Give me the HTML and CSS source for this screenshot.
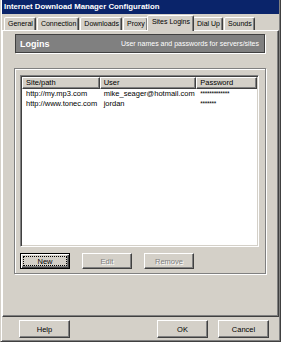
FILE: index.html
```html
<!DOCTYPE html>
<html>
<head>
<meta charset="utf-8">
<link rel="stylesheet" href="styles.css">
</head>
<body>
<div class="window">
  <div class="titlebar">Internet Download Manager Configuration</div>
  <div class="tabs">
    <div class="tab">General</div>
    <div class="tab">Connection</div>
    <div class="tab">Downloads</div>
    <div class="tab">Proxy</div>
    <div class="tab active">Sites Logins</div>
    <div class="tab">Dial Up</div>
    <div class="tab">Sounds</div>
  </div>
  <div class="panel">
    <div class="banner">
      <span class="banner-title">Logins</span>
      <span class="banner-sub">User names and passwords for servers/sites</span>
    </div>
    <div class="group">
      <div class="list">
        <div class="list-head">
          <div class="hcell c1">Site/path</div>
          <div class="hcell c2">User</div>
          <div class="hcell c3">Password</div>
        </div>
        <div class="row">
          <div class="cell c1">http://my.mp3.com</div>
          <div class="cell c2">mike_seager@hotmail.com</div>
          <div class="cell c3 pw">*************</div>
        </div>
        <div class="row">
          <div class="cell c1">http://www.tonec.com</div>
          <div class="cell c2">jordan</div>
          <div class="cell c3 pw">*******</div>
        </div>
      </div>
      <div class="group-buttons">
        <button class="btn focused"><span class="focus-rect">New</span></button>
        <button class="btn" disabled>Edit</button>
        <button class="btn" disabled>Remove</button>
      </div>
    </div>
  </div>
  <div class="footer">
    <button class="btn big">Help</button>
    <div class="spacer"></div>
    <button class="btn big">OK</button>
    <button class="btn big">Cancel</button>
  </div>
</div>
</body>
</html>
```

FILE: styles.css
```css
* { box-sizing: border-box; }
html, body { margin: 0; padding: 0; }
body {
  width: 281px;
  height: 342px;
  overflow: hidden;
  background: #d4d0c8;
  font-family: "Liberation Sans", Arial, sans-serif;
  font-size: 7.5px;
  color: #000;
}
.window {
  width: 281px;
  height: 342px;
  display: flex;
  flex-direction: column;
  border-left: 1px solid #d4d0c8;
  border-right: 1px solid #404040;
  border-bottom: 1px solid #404040;
  box-shadow: inset 1px 0 #fff, inset -1px -1px #808080;
  padding: 0 1px 2px 1px;
}
.titlebar {
  height: 14px;
  background: #0a246a;
  color: #fff;
  font-weight: bold;
  font-size: 7.8px;
  line-height: 13px;
  padding-left: 2px;
  white-space: nowrap;
}
.tabs {
  display: flex;
  align-items: flex-end;
  height: 16px;
  padding-left: 2px;
  position: relative;
  z-index: 1;
}
.tab {
  height: 13px;
  padding: 0 2px 0 3px;
  line-height: 11px;
  font-size: 7px;
  border: 1px solid;
  border-bottom: none;
  border-color: #fff #404040 transparent #fff;
  box-shadow: inset -1px 0 #808080;
  border-radius: 2px 2px 0 0;
  margin-right: 1px;
  white-space: nowrap;
  background: #d4d0c8;
  color: #000;
}
.tab.active {
  height: 16px;
  margin: 0 -1px -1px -2px;
  padding: 0 3px 0 4px;
  line-height: 12px;
  position: relative;
}
.panel {
  height: 287px;
  border: 1px solid;
  border-color: #fff #404040 #404040 #fff;
  box-shadow: inset -1px -1px #808080;
  padding: 3px 0 0 11px;
}
.banner {
  width: 250px;
  height: 19px;
  margin-left: 1px;
  background: #808080;
  border: 1px solid #404040;
  box-shadow: 1px 1px 0 #fff;
  display: flex;
  align-items: center;
  justify-content: space-between;
  padding: 0 5px 0 4px;
  color: #fff;
}
.banner-title {
  font-weight: bold;
  font-size: 9px;
}
.banner-sub {
  font-size: 7px;
}
.group {
  width: 252px;
  height: 206px;
  margin-top: 15px;
  border: 1px solid #808080;
  box-shadow: inset 1px 1px 0 #fff, 1px 1px 0 #fff;
  padding: 6px 0 0 5px;
}
.list {
  width: 239px;
  height: 172px;
  background: #fff;
  border: 1px solid;
  border-color: #808080 #fff #fff #808080;
  box-shadow: inset 1px 1px #404040, inset -1px -1px #d4d0c8;
  padding: 1px 1px 0 1px;
}
.list-head {
  display: flex;
  height: 12px;
}
.hcell {
  background: #d4d0c8;
  border: 1px solid;
  border-color: #fff #404040 #404040 #fff;
  box-shadow: inset -1px -1px #808080;
  line-height: 10px;
  padding-left: 3px;
  white-space: nowrap;
  color: #000;
}
.c1 { width: 78px; }
.c2 { width: 97px; }
.c3 { width: 61px; }
.row {
  display: flex;
  height: 10px;
  line-height: 10px;
}
.cell {
  padding-left: 4px;
  white-space: nowrap;
  overflow: hidden;
  color: #000;
}
.pw {
  font-size: 6.5px;
  letter-spacing: -0.3px;
}
.group-buttons {
  display: flex;
  gap: 12px;
  margin-top: 6px;
}
.btn {
  font-family: "Liberation Sans", Arial, sans-serif;
  font-size: 7.5px;
  color: #000;
  width: 50px;
  height: 16px;
  padding: 0;
  background: #d4d0c8;
  border: 1px solid;
  border-color: #fff #404040 #404040 #fff;
  box-shadow: inset -1px -1px #808080;
  display: flex;
  align-items: center;
  justify-content: center;
  border-radius: 0;
}
.btn:disabled {
  color: #808080;
  text-shadow: 1px 1px 0 #fff;
}
.btn.focused {
  border: 1px solid #000;
  box-shadow: inset 1px 1px #fff, inset -1px -1px #404040, inset -2px -2px #808080;
  padding: 2px;
}
.focus-rect {
  display: flex;
  align-items: center;
  justify-content: center;
  width: 100%;
  height: 100%;
  border: 1px dotted #000;
}
.footer {
  display: flex;
  align-items: flex-start;
  padding: 3px 10px 0 17px;
  gap: 10px;
}
.btn.big {
  width: 51px;
  height: 18px;
}
.spacer { flex: 1; }
```
